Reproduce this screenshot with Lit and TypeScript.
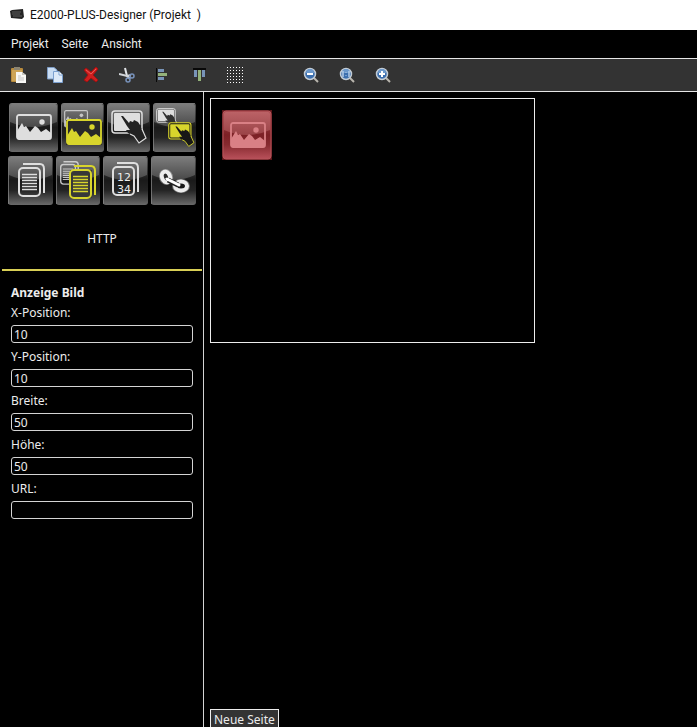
import { LitElement, html, svg, css, SVGTemplateResult } from "lit";
import { customElement, state } from "lit/decorators.js";

type Glyph = SVGTemplateResult;

const picture = (ink: string) => svg`
  <rect x="1" y="1" width="34" height="24" rx="2" fill="none" stroke=${ink} stroke-width="1.800"/>
  <path d="M1 17 L6 9 L8 13 L10 12 L14 18 L19 12 L22 14 L25 18 L30 15 L35 19 V24 H1 Z" fill=${ink}/>
  <circle cx="26" cy="8" r="2.700" fill=${ink}/>`;

const touch = (ink: string, back: string) => svg`
  <rect x="1" y="1" width="30" height="22" rx="3" fill="none" stroke=${ink} stroke-width="1.500"/>
  <rect x="3" y="3" width="26" height="18" rx="1" fill=${ink}/>
  <path d="M10 6 L12 6 L18 13 L19 11 L22 12 L23 10 L27 12 L29 15 L31 20 L35 28 L28 33 L23 26 L17 23 L15 20 L19 20 L16 16 Z" fill=${back}/>
  <path d="M31 19 L35 28 L28 33 L23 26 L19 24" fill="none" stroke=${ink} stroke-width="1.200"/>`;

const pages = (ink: string, lines: boolean) => svg`
  <rect x="1" y="5" width="21" height="28" rx="4" fill="none" stroke=${ink} stroke-width="2"/>
  <path d="M5 1 H22 Q26 1 26 6 V30" fill="none" stroke=${ink} stroke-width="2"/>
  ${lines ? svg`<path d="M4 11.500H19M4 14.500H19M4 17.500H19M4 20.500H19M4 23.500H19M4 26.500H19" stroke=${ink} stroke-width="1.500"/>` : ""}`;

const LIGHT = "#dedede";
const YELLOW = "#d8d52c";

const tiles: { name: string; w: number; row: number; art: Glyph }[] = [
  { name: "Bild", w: 49, row: 1, art: svg`<g transform="translate(7 11)">${picture(LIGHT)}</g>` },
  { name: "Bilder", w: 43, row: 1, art: svg`
      <g transform="translate(3 7) scale(.67)" opacity=".8">${picture(LIGHT)}</g>
      <path d="M5 17H41V42H5Z" fill="#292929"/><g transform="translate(5 16)">${picture(YELLOW)}</g>` },
  { name: "Taste", w: 43, row: 1, art: svg`<g transform="translate(4 7)">${touch(LIGHT, "#222")}</g>` },
  { name: "Tasten", w: 43, row: 1, art: svg`
      <g transform="translate(3 5) scale(.62)">${touch(LIGHT, "#303030")}</g>
      <rect x="15" y="20" width="24" height="15" fill="#191919"/>
      <g transform="translate(15 19) scale(.74)">${touch(YELLOW, "#171717")}</g>` },
  { name: "Text", w: 45, row: 2, art: svg`<g transform="translate(10 7)">${pages(LIGHT, true)}</g>` },
  { name: "Texte", w: 44, row: 2, art: svg`
      <g transform="translate(4 5) scale(.7)" opacity=".85">${pages(LIGHT, true)}</g>
      <rect x="14" y="14" width="22" height="28" fill="#383838"/>
      <g transform="translate(13 9)">${pages(YELLOW, true)}</g>` },
  { name: "Zahl", w: 45, row: 2, art: svg`
      <g transform="translate(9 6)">${pages(LIGHT, false)}</g>
      <text x="21" y="25" class="num">12</text><text x="21" y="37" class="num">34</text>` },
  { name: "Verknüpfung", w: 45, row: 2, art: svg`
      <g fill="#fff" opacity=".35">
        <ellipse cx="15" cy="21" rx="7" ry="8" transform="rotate(-20 15 21)"/><ellipse cx="30" cy="30" rx="9" ry="7"/>
      </g>
      <ellipse cx="15" cy="21" rx="4" ry="5.500" transform="rotate(-20 15 21)" fill="#282828" stroke="#ededed" stroke-width="4"/>
      <ellipse cx="30" cy="30" rx="6" ry="4.500" fill="#181818" stroke="#ededed" stroke-width="4"/>
      <path d="M17 24L27 29" stroke="#222" stroke-width="5"/><path d="M16 23L28 29" stroke="#fff" stroke-width="3" stroke-linecap="round"/>` },
];

const lens = (mark: Glyph) => svg`
  <path d="M11 11L15 15" stroke="#b9b6ae" stroke-width="2"/>
  <circle cx="7" cy="7" r="5.500" fill="#3c6fae" stroke="#c3ccd4" stroke-width="1.500"/>
  <path d="M3 6A4 4 0 0 1 11 6Z" fill="#6b98cb"/>${mark}`;

const dots = Array.from({ length: 36 }, (_, i) => svg`
  <rect x=${(i % 6) * 3} y=${Math.floor(i / 6) * 3} width="1" height="1" fill="#fff"/>`);

const tools: { name: string; art: Glyph | Glyph[]; apart?: boolean }[] = [
  { name: "Einfügen", art: svg`
      <rect x="0" y="1" width="12" height="14" rx="1" fill="#b98b3c"/><rect x="1" y="3" width="10" height="11" fill="#cda457"/>
      <rect x="3" y="0" width="6" height="3" fill="#8b8471"/>
      <path d="M5 5H11L15 8V16H5Z" fill="#f8f8f5"/><path d="M11 5V8H15" fill="#c6c6c0"/>
      <path d="M7 9H10M7 11H13M7 13H13" stroke="#c5c5c5"/>` },
  { name: "Kopieren", art: svg`
      <path d="M.5.5H7L10 3V12H.5Z" fill="#c8dcf3" stroke="#7d9cc5"/>
      <path d="M6.500 4.500H12L15.500 8V15.500H6.500Z" fill="#dce9f8" stroke="#7ba0d0"/><path d="M12 4.500V8H15.500" fill="#fff" stroke="#7ba0d0"/>` },
  { name: "Löschen", art: svg`
      <path d="M1 3L3 1L8 5L13 0L15 2L10 8L15 13L13 15L8 11L4 15L1 13L5 8Z" fill="#cf1e1e" stroke="#9f1111"/>
      <path d="M3 3L8 7L13 2" fill="none" stroke="#e65a55"/>` },
  { name: "Ausschneiden", art: svg`
      <path d="M6 1L8 9L11 12" fill="none" stroke="#e2e5e8" stroke-width="2"/><path d="M0 7L8 9L12 8" fill="none" stroke="#d0d4d8" stroke-width="2"/>
      <circle cx="9" cy="13" r="2" fill="none" stroke="#7892bb" stroke-width="1.500"/><circle cx="13" cy="9" r="2" fill="none" stroke="#7892bb" stroke-width="1.500"/>` },
  { name: "Links ausrichten", art: svg`
      <path d="M1.500 1V15" stroke="#080808"/><rect x="3" y="2" width="6" height="3" fill="#7894b8"/>
      <rect x="3" y="6" width="9" height="3" fill="#94b27a"/><rect x="3" y="10" width="6" height="3" fill="#7894b8"/>` },
  { name: "Oben ausrichten", art: svg`
      <path d="M2 2H15" stroke="#080808" stroke-width="2"/><rect x="3" y="3" width="3" height="7" fill="#7894b8"/>
      <rect x="7" y="3" width="3" height="11" fill="#94b27a"/><rect x="11" y="3" width="3" height="7" fill="#7894b8"/>` },
  { name: "Raster", art: dots },
  { name: "Verkleinern", apart: true, art: lens(svg`<path d="M4 7H10" stroke="#fff" stroke-width="2"/>`) },
  { name: "Originalgröße", art: lens(svg`<path d="M4 4V10M10 4V10" stroke="#b4cbe6" stroke-width="1.500"/><path d="M7 5V6M7 8V9" stroke="#b4cbe6"/>`) },
  { name: "Vergrößern", art: lens(svg`<path d="M4 7H10M7 4V10" stroke="#fff" stroke-width="2"/>`) },
];

@customElement("app-root")
export class AppRoot extends LitElement {
  @state() private fields = [
    { id: "x", label: "X-Position:", value: "10" },
    { id: "y", label: "Y-Position:", value: "10" },
    { id: "w", label: "Breite:", value: "50" },
    { id: "h", label: "Höhe:", value: "50" },
    { id: "url", label: "URL:", value: "" },
  ];

  static styles = css`
    :host {
      display: flex; flex-direction: column; height: 100vh; overflow: hidden;
      background: #000; color: #ececec; font: 12px/16px "Noto Sans", sans-serif;
    }
    * { box-sizing: border-box; }
    button { font: inherit; color: inherit; background: none; border: 0; padding: 0; margin: 0; }
    svg { display: block; }
    .title {
      display: flex; align-items: center; gap: 6px; flex: none; height: 30px; padding-left: 10px;
      background: #fff; color: #111; font-family: Roboto, sans-serif; white-space: pre;
    }
    .title h1 { margin: 0; font: inherit; }
    .menu {
      display: flex; align-items: center; gap: 13px; flex: none; height: 28px; padding-left: 11px;
      font-family: Roboto, sans-serif;
    }
    .tools {
      display: flex; flex: none; height: 34px; padding-left: 1px;
      background: #333; border: solid #e6e6e6; border-width: 1px 0;
    }
    .tool { width: 36px; display: grid; place-items: center; }
    .apart { margin-left: 40px; }
    .body { display: flex; flex: 1; min-height: 0; }
    .side { width: 204px; flex: none; border-right: 1px solid #d4d4d4; }
    .palette { display: flex; flex-direction: column; gap: 4px; padding: 11px 7px 0 8px; }
    .row { display: flex; gap: 3px; }
    .row:first-child { padding-left: 1px; }
    .tile { display: block; }
    .num { font: 11px "DejaVu Sans", sans-serif; fill: #eee; text-anchor: middle; }
    .http { display: block; width: 100%; height: 64px; padding-top: 2px; border-bottom: 2px solid #d8cf55; }
    .link { padding: 2px 1px 0 2px; }
    .props { padding: 14px 10px 0 11px; }
    .props h2 { margin: 0 0 4px; font-size: 12px; line-height: 16px; }
    .field { display: flex; flex-direction: column; gap: 4px; margin-bottom: 6px; }
    .field input {
      width: 100%; height: 18px; padding: 0 2px; margin: 0; border: 1px solid #d4d4d4; border-radius: 3px;
      background: #000; color: inherit; font: inherit; outline: 0;
    }
    .work { flex: 1; min-width: 0; display: flex; flex-direction: column; justify-content: space-between; align-items: flex-start; padding: 6px 0 0 6px; }
    .screen { position: relative; border: 1px solid #ededed; }
    .item { position: absolute; }
    .page { flex: none; height: 22px; margin-bottom: -4px; padding: 0 3px; border: 1px solid #ededed; background: #333; }
  `;

  private tile(t: (typeof tiles)[number]) {
    return html`<button class="tile" aria-label=${t.name}>
      <svg width=${t.w} height="49" viewBox="0 0 ${t.w} 49">
        <defs>
          <linearGradient id="base" x2="0" y2="1">
            <stop offset="0" stop-color="#555"/><stop offset=".5" stop-color="#1a1a1a"/>
            <stop offset=".7" stop-color="#242424"/><stop offset="1" stop-color="#6a6a6a"/>
          </linearGradient>
          <linearGradient id="gloss" x2="0" y2="1">
            <stop offset="0" stop-color="#7c7c7c"/><stop offset="1" stop-color="#484848"/>
          </linearGradient>
        </defs>
        <rect width=${t.w} height="49" rx="3" fill="url(#base)"/>
        <path d="M1 19V3Q1 1 3 1H${t.w - 3}Q${t.w - 1} 1 ${t.w - 1} 3V19Q${t.w / 2} 29 1 19Z" fill="url(#gloss)"/>
        <path d="M.5 48V3Q.5 .5 3 .5H${t.w - 1}" fill="none" stroke="#8c8c8c" opacity=".7"/>
        ${t.art}
      </svg></button>`;
  }

  render() {
    const v = (i: number) => Number(this.fields[i].value) || 0;
    return html`
      <header class="title">
        <svg width="14" height="12" viewBox="0 0 14 12">
          <path d="M0 2L2 1L13 0L14 8L12 10L1 9Z" fill="#242424"/><path d="M2 3H11M2 5H10M3 7H12" stroke="#777" stroke-width=".7"/>
        </svg>
        <h1>E2000-PLUS-Designer (Projekt  )</h1>
      </header>
      <nav class="menu"><button>Projekt</button><button>Seite</button><button>Ansicht</button></nav>
      <div class="tools">
        ${tools.map((t) => html`<button class="tool ${t.apart ? "apart" : ""}" aria-label=${t.name}>
          <svg width="16" height="16" viewBox="0 0 16 16">${t.art}</svg></button>`)}
      </div>
      <div class="body">
        <aside class="side">
          <div class="palette">
            ${[1, 2].map((r) => html`<div class="row">${tiles.filter((t) => t.row === r).map((t) => this.tile(t))}</div>`)}
          </div>
          <div class="link"><button class="http">HTTP</button></div>
          <form class="props">
            <h2>Anzeige Bild</h2>
            ${this.fields.map((f) => html`<div class="field">
              <label for=${f.id}>${f.label}</label><input id=${f.id} .value=${f.value} />
            </div>`)}
          </form>
        </aside>
        <main class="work">
          <div class="screen" style="width:325px;height:245px">
            <svg class="item" style="left:${v(0) + 1}px;top:${v(1) + 1}px" width=${v(2)} height=${v(3)} viewBox="0 0 50 50">
              <defs>
                <linearGradient id="red" x2="0" y2="1">
                  <stop offset="0" stop-color="#a84a4e"/><stop offset=".5" stop-color="#7c2025"/>
                  <stop offset=".7" stop-color="#862a2f"/><stop offset="1" stop-color="#b8505a"/>
                </linearGradient>
                <linearGradient id="redgloss" x2="0" y2="1">
                  <stop offset="0" stop-color="#bb6266"/><stop offset="1" stop-color="#9a4347"/>
                </linearGradient>
              </defs>
              <rect width="50" height="50" fill="#5a1519"/>
              <rect x="1" y="1" width="48" height="48" rx="3" fill="url(#red)" stroke="#b4555a"/>
              <path d="M2 20V4Q2 2 4 2H46Q48 2 48 4V20Q25 30 2 20Z" fill="url(#redgloss)"/>
              <g transform="translate(8 12)">${picture("#d98085")}</g>
            </svg>
          </div>
          <button class="page">Neue Seite</button>
        </main>
      </div>`;
  }
}
